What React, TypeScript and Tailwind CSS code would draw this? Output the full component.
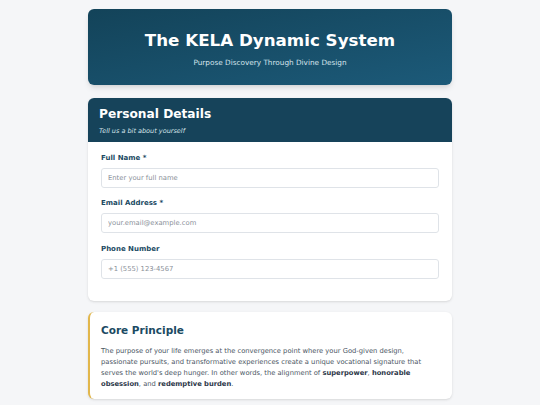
export default function App() {
  return (
    <div className="min-h-screen bg-[#f5f6f8] pt-[9px] pb-4" style={{ fontFamily: '"DejaVu Sans", Verdana, sans-serif' }}>
      <div className="mx-auto flex w-[364px] flex-col">
        {/* Hero */}
        <div className="rounded-md bg-gradient-to-br from-[#134359] to-[#1c5a79] px-4 pt-[21px] pb-[18.5px] text-center shadow-md">
          <h1 className="text-[16.7px] font-bold leading-[20px] text-white">The KELA Dynamic System</h1>
          <p className="mt-[7.5px] text-[7.3px] leading-[9px] text-[#d6e4ec]">Purpose Discovery Through Divine Design</p>
        </div>

        {/* Personal details */}
        <div className="mt-[13px] overflow-hidden rounded-md bg-white shadow-sm">
          <div className="bg-[#16435a] px-[11px] pt-[8.5px] pb-[7px]">
            <h2 className="text-[12.2px] font-bold leading-[15px] text-white">Personal Details</h2>
            <p className="mt-[5.5px] text-[6.5px] italic leading-[8px] text-[#d7e3ea]">Tell us a bit about yourself</p>
          </div>
          <div className="flex flex-col gap-[11.5px] px-[13px] pt-[11.5px] pb-[22.5px]">
            <Field label="Full Name *" placeholder="Enter your full name" />
            <Field label="Email Address *" placeholder="your.email@example.com" />
            <Field label="Phone Number" placeholder="+1 (555) 123-4567" />
          </div>
        </div>

        {/* Core principle */}
        <div className="mt-[11px] rounded-md border-l-2 border-[#e2b74c] bg-white pt-[11.5px] pr-[12px] pb-[9.5px] pl-[11px] shadow-sm">
          <h3 className="text-[10.5px] font-bold leading-[13px] text-[#1b4a63]">Core Principle</h3>
          <p className="mt-[9px] text-[6.75px] leading-[11px] text-[#4a5563]">
            The purpose of your life emerges at the convergence point where your God-given design, passionate pursuits, and transformative experiences create a unique vocational signature that serves the world's deep hunger. In other words, the alignment of{' '}
            <strong className="text-[#2d3748]">superpower</strong>, <strong className="text-[#2d3748]">honorable obsession</strong>, and{' '}
            <strong className="text-[#2d3748]">redemptive burden</strong>.
          </p>
        </div>
      </div>
    </div>
  );
}

function Field({ label, placeholder }: { label: string; placeholder: string }) {
  return (
    <div>
      <label className="block text-[7px] font-bold leading-[9px] text-[#1b4a63]">{label}</label>
      <input
        className="mt-[5px] block h-[20px] w-full rounded-[3px] border border-[#dfe3e8] px-[6px] text-[6.8px] text-[#333] outline-none placeholder:text-[#8a9099]"
        placeholder={placeholder}
      />
    </div>
  );
}
